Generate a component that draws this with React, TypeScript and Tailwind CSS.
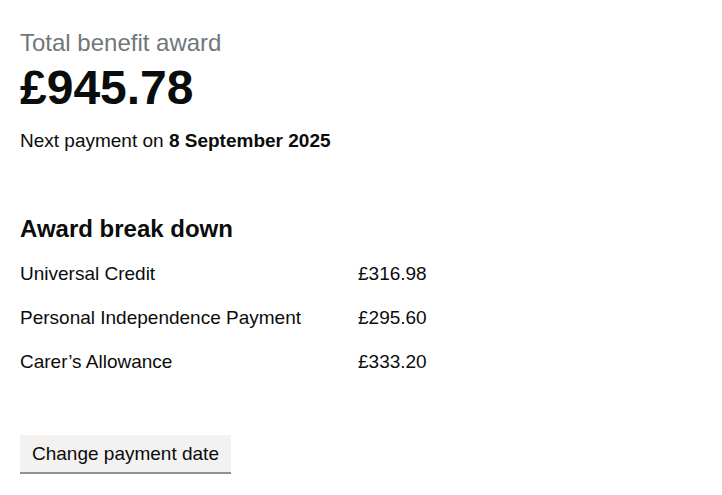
import React from 'react';

const awards = [
  { name: 'Universal Credit', amount: '£316.98' },
  { name: 'Personal Independence Payment', amount: '£295.60' },
  { name: "Carer’s Allowance", amount: '£333.20' },
];

export default function App() {
  return (
    <div className="min-h-screen bg-white px-5 pt-[28px] font-['Liberation_Sans',Arial,sans-serif] text-[#0b0c0c]">
      {/* Total */}
      <p className="text-[24px] leading-[30px] text-[#6f777b]">Total benefit award</p>
      <p className="mt-[3px] text-[48px] font-bold leading-[54px]">£945.78</p>
      <p className="mt-[13px] text-[19px] leading-[25px]">
        Next payment on <span className="font-bold">8 September 2025</span>
      </p>

      {/* Breakdown */}
      <h2 className="mt-[61px] text-[24px] font-bold leading-[30px]">Award break down</h2>
      <div className="mt-[17px] grid grid-cols-[338px_auto] gap-y-[19px] text-[19px] leading-[25px]">
        {awards.map(a => (
          <React.Fragment key={a.name}>
            <span>{a.name}</span>
            <span>{a.amount}</span>
          </React.Fragment>
        ))}
      </div>

      <button
        type="button"
        className="mt-[61px] bg-[#f3f2f1] px-[12px] pb-[7px] pt-[8px] text-[19px] leading-[22px] shadow-[0_2px_0_#929191]"
      >
        Change payment date
      </button>
    </div>
  );
}
